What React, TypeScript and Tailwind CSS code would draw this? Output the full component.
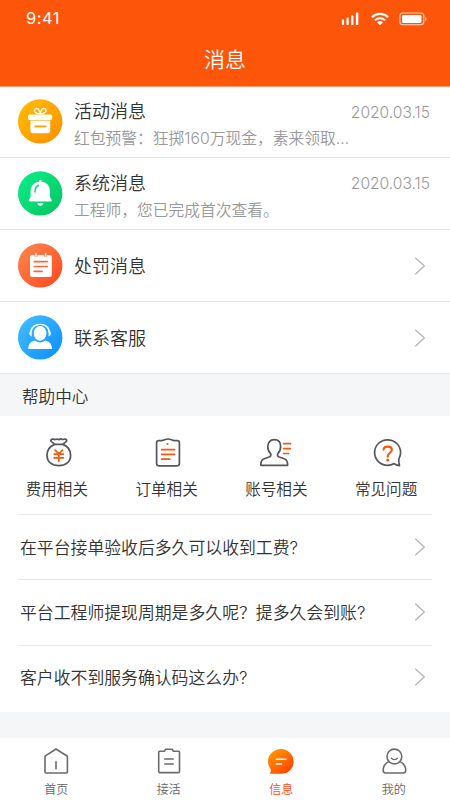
import type { ReactNode } from 'react'

const STROKE = '#55565b'
const ACCENT = '#fd560a'

function Chevron() {
  return (
    <svg width="12" height="20" viewBox="0 0 12 20" fill="none" className="shrink-0">
      <path d="M1.3 1.8 L10.3 10 L1.3 18.2" stroke="#b4b4b4" strokeWidth="1.3" />
    </svg>
  )
}

function StatusBar() {
  return (
    <div className="flex h-9 items-center justify-between pr-[23px] pl-[26px] text-white">
      <span className="text-[16.5px] leading-none font-normal tracking-[0.5px]">9:41</span>
      <div className="flex items-center pt-px">
        <svg width="18" height="14" viewBox="0 0 18 14" fill="#fff">
          <rect x="0.9" y="7.5" width="2.2" height="5.5" rx="0.5" />
          <rect x="5.5" y="5.5" width="2.2" height="7.5" rx="0.5" />
          <rect x="10.2" y="3.3" width="2.2" height="9.7" rx="0.5" />
          <rect x="14.9" y="0.6" width="2.4" height="12.4" rx="0.5" />
        </svg>
        <svg width="18" height="14" viewBox="0 0 18 14" fill="none" className="ml-[12px]">
          <path d="M0.9 5.2 A11.6 11.6 0 0 1 17.1 5.2" stroke="#fff" strokeWidth="2.1" />
          <path d="M3.8 8.4 A7.5 7.5 0 0 1 14.2 8.4" stroke="#fff" strokeWidth="2" />
          <path d="M9 13.2 L6 10.3 A4.4 4.4 0 0 1 12 10.3 Z" fill="#fff" />
        </svg>
        <svg width="28" height="14" viewBox="0 0 28 14" fill="none" className="ml-[10px]">
          <rect x="0.9" y="1" width="23.9" height="11.8" rx="3" stroke="#fff" strokeOpacity="0.75" strokeWidth="1.1" />
          <rect x="3" y="3" width="19.5" height="7.9" rx="1.3" fill="#fff" />
          <path d="M26.2 4.9 A2.3 2.3 0 0 1 26.2 9.1 Z" fill="#fff" fillOpacity="0.8" />
        </svg>
      </div>
    </div>
  )
}

function Disc({ id, from, to, children }: { id: string; from: string; to: string; children: ReactNode }) {
  return (
    <svg width="45" height="45" viewBox="0 0 45 45" fill="none" className="shrink-0">
      <defs>
        <linearGradient id={id} x1="6" y1="6" x2="38" y2="38" gradientUnits="userSpaceOnUse">
          <stop stopColor={from} />
          <stop offset="1" stopColor={to} />
        </linearGradient>
      </defs>
      <circle cx="22.2" cy="22.4" r="22.2" fill={`url(#${id})`} />
      {children}
    </svg>
  )
}

function GiftIcon() {
  return (
    <Disc id="gift" from="#ffb800" to="#ff9500">
      <rect x="10" y="15.4" width="24.2" height="5.6" rx="1.8" fill="#fff" />
      <path d="M12.4 22 H32.2 V31.8 Q32.2 34.2 29.8 34.2 H14.8 Q12.4 34.2 12.4 31.8 Z" fill="#fff" />
      <path d="M12.4 20.6 H32.2 V22.4 H12.4 Z" fill="#fff" fillOpacity="0.4" />
      <path
        d="M22.2 15 C19.5 14.8 16 13.6 16.3 11.4 C16.6 9.4 19 8.8 20.4 10.3 C21.5 11.5 22 13.2 22.2 15 C22.4 13.2 23 11.5 24.1 10.3 C25.5 8.8 27.9 9.4 28.2 11.4 C28.4 13.6 24.9 14.8 22.2 15 Z"
        stroke="#fff"
        strokeWidth="1.3"
      />
      <path d="M17 27.4 H27.6" stroke="#ffa200" strokeWidth="1.7" strokeLinecap="round" />
    </Disc>
  )
}

function BellIcon() {
  return (
    <Disc id="bell" from="#0aea85" to="#06ca67">
      <circle cx="22.3" cy="10.2" r="1.4" fill="#fff" />
      <path
        d="M22.3 10.6 C28.2 10.6 32 14.9 32 20.2 V25.8 C32 26.9 33.9 28.4 33.9 29.6 Q33.9 30.4 33 30.4 H11.6 Q10.7 30.4 10.7 29.6 C10.7 28.4 12.6 26.9 12.6 25.8 V20.2 C12.6 14.9 16.4 10.6 22.3 10.6 Z"
        fill="#fff"
      />
      <path d="M17 21 C17 17.6 18.1 15.4 20.4 14.3" stroke="#08dc77" strokeWidth="1.5" strokeLinecap="round" />
      <path d="M19.3 32 H25.3 Q24.8 34.8 22.3 34.8 Q19.8 34.8 19.3 32 Z" fill="#fff" />
    </Disc>
  )
}

function NoteIcon() {
  return (
    <Disc id="note" from="#ff8048" to="#fe5024">
      <rect x="12" y="12" width="21.8" height="22" rx="2.2" fill="#fff" />
      <path d="M18 10.2 V13.6 M27.6 10.2 V13.6" stroke="#ff6a38" strokeWidth="3" />
      <path d="M18 10.4 V12.8 M27.6 10.4 V12.8" stroke="#fff" strokeWidth="1.5" strokeLinecap="round" />
      <path d="M16.2 18.6 H29.4 M16.2 23.5 H29.4 M16.2 28.4 H24.2" stroke="#ff6836" strokeWidth="1.6" strokeLinecap="round" />
    </Disc>
  )
}

function ServiceIcon() {
  return (
    <Disc id="service" from="#3dbafe" to="#1295fe">
      <path d="M12.9 17.5 C12.9 6.6 31.3 6.6 31.3 17.5" stroke="#fff" strokeWidth="1.4" />
      <path d="M13.6 15.6 Q11.3 16 11.3 18.3 Q11.3 20.8 13.6 21.4 Z" fill="#fff" />
      <path d="M30.6 15.6 Q32.9 16 32.9 18.3 Q32.9 20.8 30.6 21.4 Z" fill="#fff" />
      <ellipse cx="22.1" cy="18.4" rx="6.3" ry="7.3" fill="#fff" />
      <path
        d="M10.2 34 C10.2 29.2 12.8 26.4 17 25.6 C19.6 28 24.6 28 27.2 25.6 C31.4 26.4 34 29.2 34 34 Z"
        fill="#fff"
      />
    </Disc>
  )
}

function MoneyBagIcon() {
  return (
    <svg width="36" height="32" viewBox="0 0 36 32" fill="none" strokeLinecap="round" strokeLinejoin="round">
      <path
        d="M15.6 8.4 C10.8 10.4 8 14.6 8 19.2 C8 25.8 12.8 29.6 19.8 29.6 C26.8 29.6 31.6 25.8 31.6 19.2 C31.6 14.6 28.8 10.4 24 8.4 Z"
        stroke={STROKE}
        strokeWidth="1.7"
      />
      <path
        d="M15.4 8.2 C14.2 6.4 12 6 11.8 4.6 C11.8 3 14.4 2.8 16.2 3.6 C17.6 2.8 18.8 2.8 19.8 3.7 C21 2.8 22.4 2.8 23.6 3.6 C25.4 2.7 27.8 3 27.7 4.6 C27.6 6 25.4 6.4 24.3 8.2"
        stroke={STROKE}
        strokeWidth="1.7"
      />
      <path d="M16 14 L19.8 17.8 L23.6 14 M15.2 18.1 H24.4 M15.2 21.9 H24.4 M19.8 18 V25.2" stroke={ACCENT} strokeWidth="1.7" />
    </svg>
  )
}

function OrderIcon() {
  return (
    <svg width="36" height="32" viewBox="0 0 36 32" fill="none" strokeLinecap="round" strokeLinejoin="round">
      <path
        d="M9.8 4.6 H12.5 C15.1 4.6 16.1 3 19 3 C21.9 3 22.9 4.6 25.5 4.6 H28.2 Q30.4 4.6 30.4 6.8 V27.6 Q30.4 29.8 28.2 29.8 H9.8 Q7.6 29.8 7.6 27.6 V6.8 Q7.6 4.6 9.8 4.6 Z"
        stroke={STROKE}
        strokeWidth="1.7"
      />
      <circle cx="18.5" cy="8" r="1.1" fill={ACCENT} />
      <path d="M12.7 13.7 H25.5 M12.7 18.4 H25.5 M12.7 23.2 H20.7" stroke={ACCENT} strokeWidth="1.7" />
    </svg>
  )
}

function AccountIcon() {
  return (
    <svg width="36" height="32" viewBox="0 0 36 32" fill="none" strokeLinecap="round" strokeLinejoin="round">
      <path
        d="M16.2 3.7 C12.2 3.7 9.8 6.4 9.8 10.4 C9.8 13.4 10.6 15.6 12.4 17.4 C13.2 18.4 13 20.2 11.8 20.8 L5.6 23 C3.6 23.8 2.8 25.2 2.8 29.3 H29.6 C29.6 25.2 28.8 23.8 26.8 23 L20.6 20.8 C19.4 20.2 19.2 18.4 20 17.4 C21.8 15.6 22.6 13.4 22.6 10.4 C22.6 6.4 20.2 3.7 16.2 3.7 Z"
        stroke={STROKE}
        strokeWidth="1.7"
      />
      <path d="M25.6 7.7 H32.4 M25.6 12.6 H32.4 M25.6 17.5 H30.6" stroke={ACCENT} strokeWidth="1.7" />
    </svg>
  )
}

function QuestionIcon() {
  return (
    <svg width="36" height="32" viewBox="0 0 36 32" fill="none" strokeLinecap="round" strokeLinejoin="round">
      <path
        d="M31 22.4 C32.2 20.6 32.6 18.8 32.6 16.6 C32.6 9.4 26.8 3.8 19.6 3.8 C12.4 3.8 6.6 9.4 6.6 16.6 C6.6 23.8 12.4 29.4 19.6 29.4 C22 29.4 24.2 28.8 26.2 27.6 C27.4 28.6 29.4 29.6 31.5 29.6 C31.2 27.6 30.2 24.6 31 22.4 Z"
        stroke={STROKE}
        strokeWidth="1.7"
      />
      <path d="M15.6 13.8 C15.6 9.5 23.9 9.5 23.9 13.8 C23.9 17 19.8 16.6 19.7 20.6" stroke={ACCENT} strokeWidth="2.1" />
      <circle cx="19.7" cy="24" r="1.5" fill={ACCENT} />
    </svg>
  )
}

function HomeTabIcon() {
  return (
    <svg width="28" height="28" viewBox="0 0 28 28" fill="none" stroke="#6b6b6b" strokeWidth="1.6" strokeLinejoin="round">
      <path d="M14 2 L25.4 9.2 V25 Q25.4 26 24.4 26 H4 Q3 26 3 25 V9.2 Z" />
      <path d="M14 14.2 V22.2" />
    </svg>
  )
}

function JobTabIcon() {
  return (
    <svg width="28" height="28" viewBox="0 0 28 28" fill="none" stroke="#6b6b6b" strokeWidth="1.6" strokeLinejoin="round">
      <path d="M9.6 4.2 L10.4 2.3 H17.4 L18.2 4.2 H23.4 Q24.5 4.2 24.5 5.3 V24.5 Q24.5 25.6 23.4 25.6 H4.8 Q3.7 25.6 3.7 24.5 V5.3 Q3.7 4.2 4.8 4.2 Z" />
      <path d="M9.2 12 H18.8 M9.2 17 H18.8" />
    </svg>
  )
}

function MessageTabIcon() {
  return (
    <svg width="28" height="28" viewBox="0 0 28 28" fill="none">
      <defs>
        <linearGradient id="bubble" x1="5" y1="3" x2="22" y2="26" gradientUnits="userSpaceOnUse">
          <stop stopColor="#ff9800" />
          <stop offset="1" stopColor="#ff4300" />
        </linearGradient>
      </defs>
      <path
        d="M14 2 C21 2 26.6 7.6 26.6 14.4 C26.6 21.6 21.4 26.8 14 26.8 H4 C2.8 26.8 2.6 25.8 3.4 25 C4.2 24.2 4.2 23 3.4 21.8 C2 19.6 1 17.2 1 14.4 C1 7.6 7 2 14 2 Z"
        fill="url(#bubble)"
      />
      <path d="M9.3 12.3 H19 M9.3 17 H14.5" stroke="#fff" strokeWidth="1.6" strokeLinecap="round" />
    </svg>
  )
}

function MineTabIcon() {
  return (
    <svg width="28" height="28" viewBox="0 0 28 28" fill="none" stroke="#6b6b6b" strokeWidth="1.6" strokeLinecap="round" strokeLinejoin="round">
      <circle cx="14.4" cy="9.5" r="7.4" />
      <path d="M11.4 11.2 Q14.4 14 17.4 11.2" strokeWidth="1.3" />
      <path d="M8.6 14.6 C5 16.6 3.2 19.4 3.2 23.2 Q3.2 26 5.6 26 H23.2 Q25.7 26 25.7 23.2 C25.7 19.4 23.8 16.6 20.2 14.6" />
    </svg>
  )
}

const messages = [
  { title: '活动消息', text: '红包预警：狂掷160万现金，素来领取…', date: '2020.03.15', icon: <GiftIcon /> },
  { title: '系统消息', text: '工程师，您已完成首次查看。', date: '2020.03.15', icon: <BellIcon /> },
  { title: '处罚消息', icon: <NoteIcon /> },
  { title: '联系客服', icon: <ServiceIcon /> },
]

const topics = [
  { label: '费用相关', icon: <MoneyBagIcon /> },
  { label: '订单相关', icon: <OrderIcon /> },
  { label: '账号相关', icon: <AccountIcon /> },
  { label: '常见问题', icon: <QuestionIcon /> },
]

const questions = ['在平台接单验收后多久可以收到工费?', '平台工程师提现周期是多久呢？提多久会到账?', '客户收不到服务确认码这么办?']

const tabs = [
  { label: '首页', icon: <HomeTabIcon /> },
  { label: '接活', icon: <JobTabIcon /> },
  { label: '信息', icon: <MessageTabIcon />, active: true },
  { label: '我的', icon: <MineTabIcon /> },
]

export default function App() {
  return (
    <div className="flex h-[800px] w-[450px] flex-col overflow-hidden bg-[#f5f6f8] font-['Inter','Noto_Sans_CJK_SC',sans-serif] font-[350] text-[#333]">
      <header className="h-[87px] shrink-0 border-b border-[#ff9a6c] bg-[#fd560a]">
        <StatusBar />
        <h1 className="pt-[9px] text-center text-[21px] leading-[30px] text-white">消息</h1>
      </header>

      <ul className="bg-white">
        {messages.map((m, i) => (
          <li
            key={m.title}
            className={`flex items-center border-b border-[#e4e4e4] pr-5 pb-px pl-[18px] ${i === 0 ? 'h-[71px]' : 'h-[72px]'}`}
          >
            {m.icon}
            <div className="ml-[11px] flex-1">
              <div className={`flex items-center justify-between ${m.text ? 'pt-[7px]' : 'pt-px'}`}>
                <span className={`text-[18px] leading-[26px] ${m.text ? '' : 'pt-[3px]'}`}>{m.title}</span>
                {m.date ? (
                  <span className="text-[15.6px] leading-[23px] text-[#999]">{m.date}</span>
                ) : (
                  <span className="pr-1">
                    <Chevron />
                  </span>
                )}
              </div>
              {m.text && <p className="pt-0.5 text-[15.75px] leading-[24px] whitespace-nowrap text-[#999]">{m.text}</p>}
            </div>
          </li>
        ))}
      </ul>

      <h2 className="flex h-[42px] shrink-0 items-center pt-[4px] pl-[22px] text-[16.6px]">帮助中心</h2>

      <section className="h-[296px] shrink-0 bg-white px-[18px]">
        <div className="-mx-4 grid h-[98px] w-[439px] grid-cols-4 pt-5">
          {topics.map((t) => (
            <div key={t.label} className="flex flex-col items-center">
              {t.icon}
              <span className="mt-[9.5px] text-[15.6px] leading-6">{t.label}</span>
            </div>
          ))}
        </div>
        {questions.map((q) => (
          <div key={q} className="flex h-[65.3px] items-center justify-between border-t border-[#e8e8e8] pr-[6px] pb-px pl-[2px]">
            <span className="pt-[3px] text-[16.85px]">{q}</span>
            <Chevron />
          </div>
        ))}
      </section>

      <nav className="mt-auto grid h-[62px] shrink-0 grid-cols-4 bg-white pt-[9px]">
        {tabs.map((t) => (
          <div key={t.label} className={`flex flex-col items-center ${t.active ? 'text-[#fd4a0a]' : 'text-[#666]'}`}>
            {t.icon}
            <span className="mt-[6px] text-[12px] leading-[18px]">{t.label}</span>
          </div>
        ))}
      </nav>
    </div>
  )
}
